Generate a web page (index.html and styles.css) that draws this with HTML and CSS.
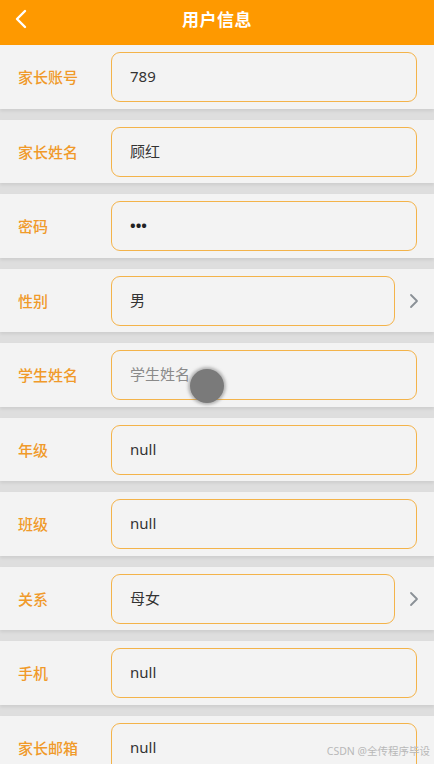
FILE: index.html
```html
<!DOCTYPE html>
<html lang="zh-CN">
<head>
    <meta charset="UTF-8">
    <meta name="viewport" content="width=device-width, initial-scale=1.0">
    <title>用户信息</title>
    <link rel="stylesheet" href="styles.css">
</head>
<body>
    <!-- Top bar -->
    <header class="topbar">
        <span class="back">
            <svg width="16" height="20" viewBox="0 0 16 20"><path d="M12 2 L4 10 L12 18" fill="none" stroke="#fff" stroke-width="2.4" stroke-linecap="round" stroke-linejoin="round"/></svg>
        </span>
        <h1 class="title">用户信息</h1>
    </header>

    <!-- Form rows -->
    <div class="list">
        <div class="row">
            <label class="label">家长账号</label>
            <div class="field">789</div>
        </div>
        <div class="row">
            <label class="label">家长姓名</label>
            <div class="field">顾红</div>
        </div>
        <div class="row">
            <label class="label">密码</label>
            <div class="field dots">•••</div>
        </div>
        <div class="row">
            <label class="label">性别</label>
            <div class="field short">男</div>
            <span class="arrow"><svg width="10" height="16" viewBox="0 0 10 16"><path d="M2 2 L8 8 L2 14" fill="none" stroke="#8a9096" stroke-width="1.8" stroke-linecap="round" stroke-linejoin="round"/></svg></span>
        </div>
        <div class="row">
            <label class="label">学生姓名</label>
            <div class="field placeholder">学生姓名</div>
            <span class="touch"></span>
        </div>
        <div class="row">
            <label class="label">年级</label>
            <div class="field">null</div>
        </div>
        <div class="row">
            <label class="label">班级</label>
            <div class="field">null</div>
        </div>
        <div class="row">
            <label class="label">关系</label>
            <div class="field short">母女</div>
            <span class="arrow"><svg width="10" height="16" viewBox="0 0 10 16"><path d="M2 2 L8 8 L2 14" fill="none" stroke="#8a9096" stroke-width="1.8" stroke-linecap="round" stroke-linejoin="round"/></svg></span>
        </div>
        <div class="row">
            <label class="label">手机</label>
            <div class="field">null</div>
        </div>
        <div class="row">
            <label class="label">家长邮箱</label>
            <div class="field">null</div>
        </div>
    </div>

    <div class="watermark">CSDN @全传程序毕设</div>
</body>
</html>
```

FILE: styles.css
```css
/* General */
body {
    margin: 0;
    padding: 0;
    height: 764px;
    overflow: hidden;
    background: #dedede;
    font-family: 'Noto Sans', 'Noto Sans CJK SC', sans-serif;
    position: relative;
}

/* Top bar */
.topbar {
    height: 45px;
    background: #fe9900;
    display: flex;
    align-items: center;
    justify-content: center;
    position: relative;
}

.back {
    position: absolute;
    left: 13px;
    top: 9px;
    display: flex;
}

.title {
    margin: 0;
    color: #fff;
    font-size: 17px;
    font-weight: bold;
    letter-spacing: 0.5px;
    line-height: 1;
    margin-top: -6px;
}

/* Rows */
.list {
    display: flex;
    flex-direction: column;
    gap: 11px;
}

.row {
    height: 63.5px;
    background: #f3f3f3;
    display: flex;
    align-items: flex-start;
    padding-top: 7px;
    box-sizing: border-box;
    box-shadow: 0 2px 3px rgba(0, 0, 0, 0.08);
    position: relative;
}

.label {
    width: 111px;
    padding-left: 18px;
    box-sizing: border-box;
    color: #f09a2a;
    font-size: 15px;
    font-weight: 500;
    line-height: 50px;
}

.field {
    width: 306px;
    height: 50px;
    box-sizing: border-box;
    border: 1.5px solid #f3b34a;
    border-radius: 9px;
    padding-left: 18px;
    font-size: 15px;
    line-height: 47px;
    color: #333;
}

.field.short {
    width: 284px;
}

.field.dots {
    font-size: 15px;
    font-weight: bold;
    letter-spacing: 0;
    color: #222;
}

.field.placeholder {
    color: #8a8a8a;
}

.arrow {
    display: flex;
    margin-left: 14px;
    margin-top: 17px;
}

.touch {
    position: absolute;
    left: 190px;
    top: 26px;
    width: 34px;
    height: 34px;
    border-radius: 50%;
    background: #7a7a7a;
    box-shadow: 0 0 3px 2px rgba(120, 120, 120, 0.5);
}

.watermark {
    position: absolute;
    right: 4px;
    bottom: 6px;
    font-size: 10.5px;
    color: #b8b8b8;
}
```
